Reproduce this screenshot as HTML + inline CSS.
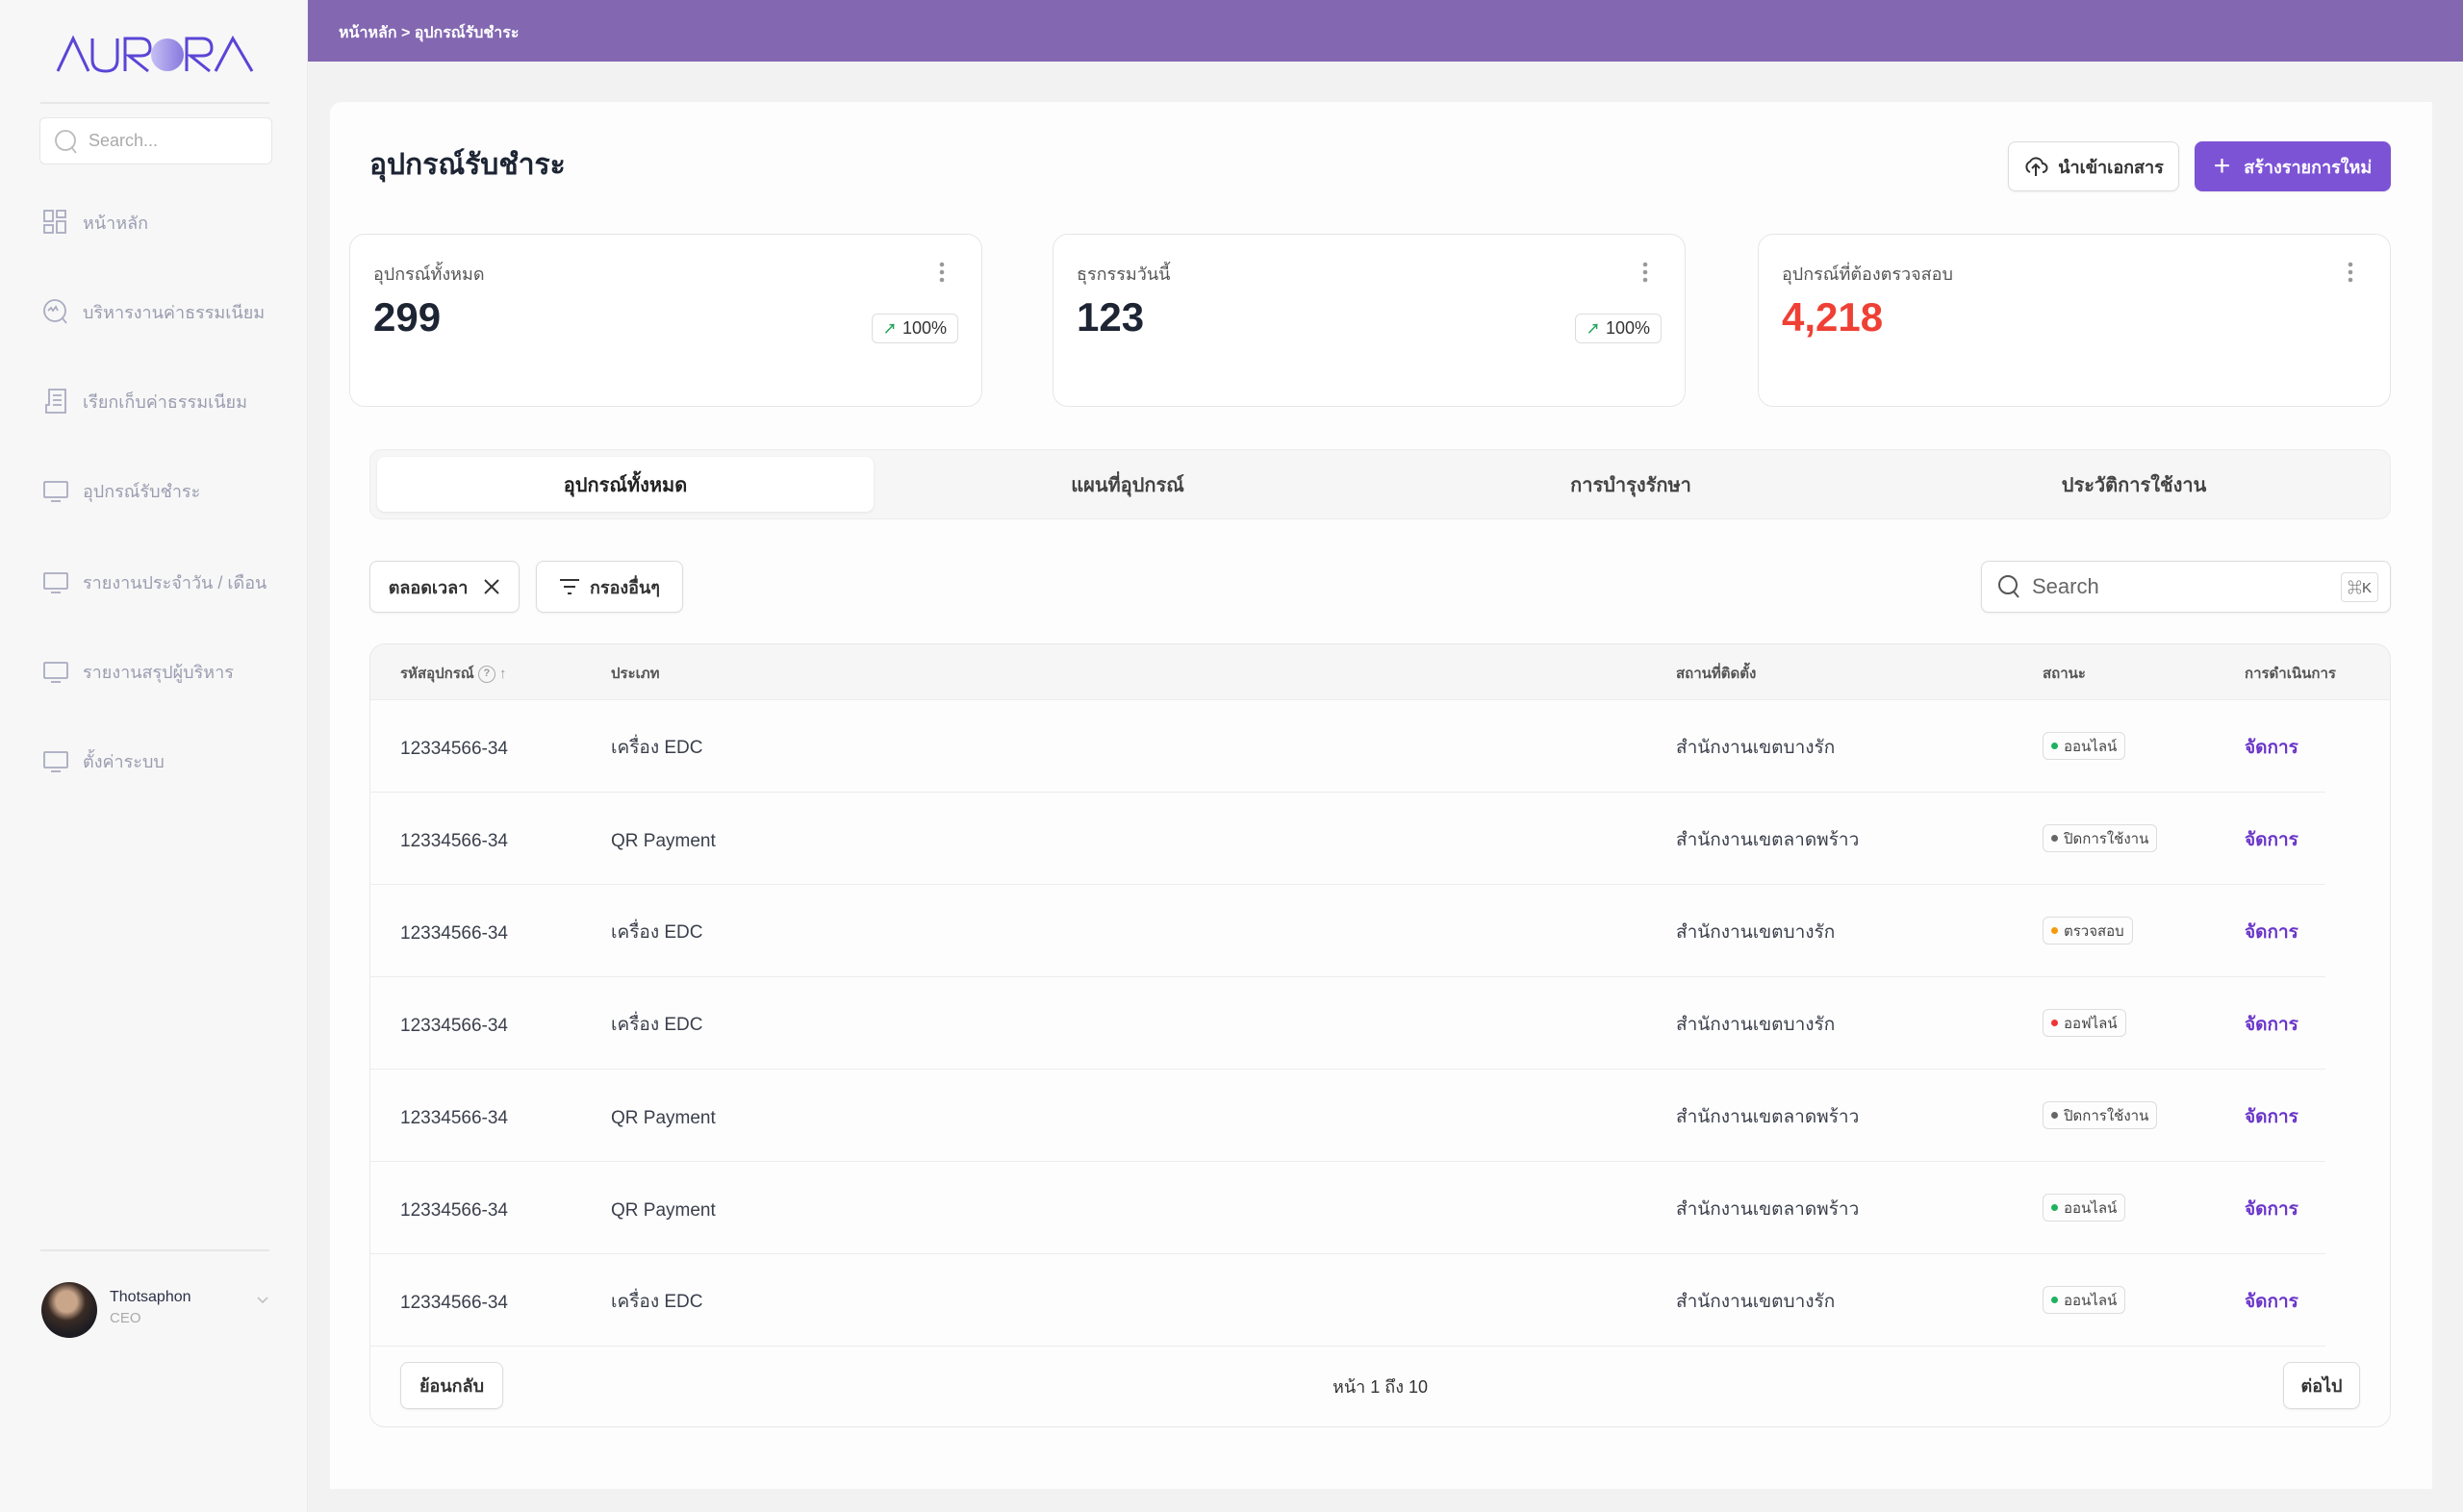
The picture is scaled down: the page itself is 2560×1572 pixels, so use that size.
<!DOCTYPE html>
<html><head><meta charset="utf-8"><style>
*{box-sizing:border-box;margin:0;padding:0}
body{width:2560px;height:1572px;background:#f2f2f2;font-family:"Liberation Sans","Noto Sans CJK SC",sans-serif;color:#1d2433;position:relative;overflow:hidden}
.a{position:absolute}
.sb{left:0;top:0;width:320px;height:1572px;background:#f7f7f7;border-right:1px solid #ececec}
.nav{left:44px;font-size:18px;color:#9a9cb0;display:flex;align-items:center;gap:14px;height:30px}
.nav svg{width:28px;height:28px}
.hdr{left:320px;top:0;width:2240px;height:64px;background:#8367b1;color:#fff;font-size:16px;font-weight:bold;padding:22px 0 0 32px}
.main{left:343px;top:106px;width:2185px;height:1442px;background:#fdfdfd;border-radius:12px 0 0 0}
.btn{border:1.5px solid #dcdcdc;border-radius:8px;background:#fff;display:flex;align-items:center;justify-content:center;font-weight:bold;font-size:18px;color:#333;box-shadow:0 1px 2px rgba(0,0,0,.06)}
.card{top:243px;width:658px;height:180px;border:1.5px solid #e6e6e6;border-radius:16px;background:#fff}
.card .l{left:24px;top:26px;font-size:18px;color:#555}
.card .n{left:24px;top:62px;font-size:42px;font-weight:bold;color:#1d2433}
.card .d{right:38px;top:28px;width:6px;height:22px}
.badge{right:24px;top:82px;width:90px;height:31px;border:1.5px solid #ddd;border-radius:6px;font-size:18px;color:#333;display:flex;align-items:center;justify-content:center;gap:6px}
.tab{top:475px;height:57px;display:flex;align-items:center;justify-content:center;font-size:20px;font-weight:bold;color:#444;width:516px}
.th{font-size:15px;font-weight:bold;color:#555;top:688px}
.row{left:384px;width:2033px;height:96px;border-bottom:1.5px solid #ececec}
.cell{font-size:19px;color:#3a3f4b}
.lt{margin-top:4px}
.th2{margin-top:-2px}
.st{height:29px;border:1.5px solid #ddd;border-radius:6px;font-size:15px;color:#444;display:flex;align-items:center;padding:0 8px;gap:6px}
.st i{width:7px;height:7px;border-radius:50%;display:inline-block}
.act{font-size:19px;font-weight:bold;color:#6a35c9;margin-top:-2px}
</style></head><body>
<div class="a sb"></div>
<svg class="a" style="left:58px;top:36px" width="206" height="40" viewBox="0 0 206 40" fill="none" stroke="#5a45d6" stroke-width="3">
<path d="M2 38 L18 4 L34 38"/><path d="M38 4 V26 Q38 38 52 38 Q64 38 64 26 V4"/><path d="M72 38 V4 H88 Q98 4 98 14 Q98 22 88 22 H76 L96 38"/>
<defs><linearGradient id="g" x1="0" x2="1"><stop offset="0" stop-color="#b9b2f2"/><stop offset="1" stop-color="#6a58d8"/></linearGradient></defs>
<circle cx="116" cy="21" r="17" fill="url(#g)" stroke="none" opacity=".8"/>
<path d="M136 38 V4 H152 Q162 4 162 14 Q162 22 152 22 H140 L160 38"/><path d="M166 38 L184 4 L204 38"/></svg>
<div class="a" style="left:42px;top:106px;width:238px;height:2px;background:#e7e7e7"></div>
<div class="a" style="left:41px;top:122px;width:242px;height:49px;background:#fff;border:1.5px solid #e6e6e6;border-radius:6px;display:flex;align-items:center;padding-left:14px;gap:10px;color:#aaa;font-size:18px"><svg width="26" height="28" viewBox="0 0 26 28" fill="none" stroke="#bbb" stroke-width="1.8"><circle cx="12" cy="13" r="10"/><path d="M19 21l4 5"/></svg>Search...</div>
<div class="a nav" style="top:216px"><svg viewBox="0 0 28 28" fill="none" stroke="#a9abc0" stroke-width="1.8"><rect x="2" y="2" width="9" height="11"/><rect x="15" y="2" width="9" height="7"/><rect x="2" y="17" width="9" height="8"/><rect x="15" y="13" width="9" height="12"/></svg>หน้าหลัก</div>
<div class="a nav" style="top:309px"><svg viewBox="0 0 28 28" fill="none" stroke="#a9abc0" stroke-width="1.8"><circle cx="13" cy="13" r="11"/><path d="M6 13l3-3 2 3 3-4 2 4M21 21l4 5"/></svg>บริหารงานค่าธรรมเนียม</div>
<div class="a nav" style="top:402px"><svg viewBox="0 0 28 28" fill="none" stroke="#a9abc0" stroke-width="1.8"><path d="M7 2h17v24H4v-8h3zM11 8h9M11 13h9M11 18h9"/></svg>เรียกเก็บค่าธรรมเนียม</div>
<div class="a nav" style="top:495px"><svg viewBox="0 0 28 28" fill="none" stroke="#a9abc0" stroke-width="1.8"><rect x="2" y="5" width="24" height="16" rx="1"/><path d="M9 25h10"/></svg>อุปกรณ์รับชำระ</div>
<div class="a nav" style="top:590px"><svg viewBox="0 0 28 28" fill="none" stroke="#a9abc0" stroke-width="1.8"><rect x="2" y="5" width="24" height="16" rx="1"/><path d="M9 25h10"/></svg>รายงานประจำวัน / เดือน</div>
<div class="a nav" style="top:683px"><svg viewBox="0 0 28 28" fill="none" stroke="#a9abc0" stroke-width="1.8"><rect x="2" y="5" width="24" height="16" rx="1"/><path d="M9 25h10"/></svg>รายงานสรุปผู้บริหาร</div>
<div class="a nav" style="top:776px"><svg viewBox="0 0 28 28" fill="none" stroke="#a9abc0" stroke-width="1.8"><rect x="2" y="5" width="24" height="16" rx="1"/><path d="M9 25h10"/></svg>ตั้งค่าระบบ</div>
<div class="a" style="left:42px;top:1299px;width:238px;height:2px;background:#e7e7e7"></div>
<div class="a" style="left:43px;top:1333px;width:58px;height:58px;border-radius:50%;background:radial-gradient(circle at 45% 35%,#c9a58a 0 22%,#3b2c25 40%,#1c1c22 70%)"></div>
<div class="a" style="left:114px;top:1340px;font-size:16px;color:#2c3048">Thotsaphon</div>
<div class="a" style="left:114px;top:1362px;font-size:15px;color:#aaa">CEO</div>
<svg class="a" style="left:266px;top:1347px" width="14" height="10" viewBox="0 0 14 10" fill="none" stroke="#bbb" stroke-width="1.5"><path d="M2 2l5 5 5-5"/></svg>

<div class="a hdr">หน้าหลัก &gt; อุปกรณ์รับชำระ</div>
<div class="a main"></div>
<div class="a" style="left:384px;top:148px;font-size:30px;font-weight:bold;color:#1d2433">อุปกรณ์รับชำระ</div>
<div class="a btn" style="left:2087px;top:147px;width:178px;height:52px;gap:10px"><svg width="26" height="26" viewBox="0 0 26 26" fill="none" stroke="#333" stroke-width="2"><path d="M7 19a6 6 0 0 1 0-11 7 7 0 0 1 13 2 4.5 4.5 0 0 1 0 9"/><path d="M13 23V12M9 15l4-4 4 4"/></svg>นำเข้าเอกสาร</div>
<div class="a btn" style="left:2281px;top:147px;width:204px;height:52px;background:#7d53d6;border-color:#7d53d6;color:#fff;gap:14px"><span style="font-size:30px;font-weight:normal;line-height:1">+</span>สร้างรายการใหม่</div>

<div class="a card" style="left:363px"><div class="a l">อุปกรณ์ทั้งหมด</div><div class="a n">299</div><svg class="a d" viewBox="0 0 6 22" fill="#999"><circle cx="3" cy="3" r="2.3"/><circle cx="3" cy="11" r="2.3"/><circle cx="3" cy="19" r="2.3"/></svg><div class="a badge"><span style="color:#22a35a;font-size:14px;font-weight:bold">↗</span>100%</div></div>
<div class="a card" style="left:1094px"><div class="a l">ธุรกรรมวันนี้</div><div class="a n">123</div><svg class="a d" viewBox="0 0 6 22" fill="#999"><circle cx="3" cy="3" r="2.3"/><circle cx="3" cy="11" r="2.3"/><circle cx="3" cy="19" r="2.3"/></svg><div class="a badge"><span style="color:#22a35a;font-size:14px;font-weight:bold">↗</span>100%</div></div>
<div class="a card" style="left:1827px"><div class="a l">อุปกรณ์ที่ต้องตรวจสอบ</div><div class="a n" style="color:#ef4035">4,218</div><svg class="a d" viewBox="0 0 6 22" fill="#999"><circle cx="3" cy="3" r="2.3"/><circle cx="3" cy="11" r="2.3"/><circle cx="3" cy="19" r="2.3"/></svg></div>

<div class="a" style="left:384px;top:467px;width:2101px;height:73px;background:#f6f6f6;border:1.5px solid #ececec;border-radius:12px"></div>
<div class="a" style="left:392px;top:475px;width:516px;height:57px;background:#fff;border-radius:8px;box-shadow:0 1px 3px rgba(0,0,0,.08)"></div>
<div class="a tab" style="left:392px;color:#222">อุปกรณ์ทั้งหมด</div>
<div class="a tab" style="left:914px">แผนที่อุปกรณ์</div>
<div class="a tab" style="left:1437px">การบำรุงรักษา</div>
<div class="a tab" style="left:1960px">ประวัติการใช้งาน</div>

<div class="a btn" style="left:384px;top:583px;width:156px;height:54px;gap:16px">ตลอดเวลา<svg width="18" height="18" viewBox="0 0 18 18" stroke="#333" stroke-width="2"><path d="M2 2l14 14M16 2L2 16"/></svg></div>
<div class="a btn" style="left:557px;top:583px;width:153px;height:54px;gap:10px"><svg width="22" height="18" viewBox="0 0 22 18" stroke="#333" stroke-width="2"><path d="M1 2h20M5 9h12M9 16h4"/></svg>กรองอื่นๆ</div>
<div class="a btn" style="left:2059px;top:583px;width:426px;height:54px;justify-content:flex-start;padding-left:16px;gap:12px;font-weight:normal;font-size:22px;color:#666"><svg width="24" height="26" viewBox="0 0 24 26" fill="none" stroke="#555" stroke-width="2"><circle cx="11" cy="11" r="9"/><path d="M17 18l5 6"/></svg>Search<span class="a" style="right:12px;top:11px;border:1px solid #ddd;border-radius:4px;font-size:15px;padding:4px 6px;color:#555">⌘K</span></div>

<div class="a" style="left:384px;top:669px;width:2101px;height:815px;border:1.5px solid #e8e8e8;border-radius:16px;background:#fdfdfd;overflow:hidden"><div style="height:58px;background:#f6f6f6;border-bottom:1.5px solid #ececec"></div></div>
<div class="a th" style="left:416px">รหัสอุปกรณ์ <span style="display:inline-block;width:18px;height:18px;border:1.5px solid #aaa;border-radius:50%;font-size:11px;text-align:center;line-height:15px;color:#999;vertical-align:middle">?</span> <span style="color:#999">↑</span></div>
<div class="a th" style="left:635px">ประเภท</div>
<div class="a th" style="left:1742px">สถานที่ติดตั้ง</div>
<div class="a th" style="left:2123px">สถานะ</div>
<div class="a th" style="left:2333px">การดำเนินการ</div>

<div class="a row" style="top:728px"></div><div class="a row" style="top:824px"></div><div class="a row" style="top:920px"></div><div class="a row" style="top:1016px"></div><div class="a row" style="top:1112px"></div><div class="a row" style="top:1208px"></div><div class="a row" style="top:1304px"></div>

<div class="a cell lt" style="left:416px;top:764px">12334566-34</div><div class="a cell th2" style="left:635px;top:764px">เครื่อง EDC</div><div class="a cell th2" style="left:1742px;top:764px">สำนักงานเขตบางรัก</div><div class="a st" style="left:2123px;top:761px"><i style="background:#1fb160"></i>ออนไลน์</div><div class="a act" style="left:2333px;top:764px">จัดการ</div>
<div class="a cell lt" style="left:416px;top:860px">12334566-34</div><div class="a cell lt" style="left:635px;top:860px">QR Payment</div><div class="a cell th2" style="left:1742px;top:860px">สำนักงานเขตลาดพร้าว</div><div class="a st" style="left:2123px;top:857px"><i style="background:#666"></i>ปิดการใช้งาน</div><div class="a act" style="left:2333px;top:860px">จัดการ</div>
<div class="a cell lt" style="left:416px;top:956px">12334566-34</div><div class="a cell th2" style="left:635px;top:956px">เครื่อง EDC</div><div class="a cell th2" style="left:1742px;top:956px">สำนักงานเขตบางรัก</div><div class="a st" style="left:2123px;top:953px"><i style="background:#f59a0c"></i>ตรวจสอบ</div><div class="a act" style="left:2333px;top:956px">จัดการ</div>
<div class="a cell lt" style="left:416px;top:1052px">12334566-34</div><div class="a cell th2" style="left:635px;top:1052px">เครื่อง EDC</div><div class="a cell th2" style="left:1742px;top:1052px">สำนักงานเขตบางรัก</div><div class="a st" style="left:2123px;top:1049px"><i style="background:#ee3535"></i>ออฟไลน์</div><div class="a act" style="left:2333px;top:1052px">จัดการ</div>
<div class="a cell lt" style="left:416px;top:1148px">12334566-34</div><div class="a cell lt" style="left:635px;top:1148px">QR Payment</div><div class="a cell th2" style="left:1742px;top:1148px">สำนักงานเขตลาดพร้าว</div><div class="a st" style="left:2123px;top:1145px"><i style="background:#666"></i>ปิดการใช้งาน</div><div class="a act" style="left:2333px;top:1148px">จัดการ</div>
<div class="a cell lt" style="left:416px;top:1244px">12334566-34</div><div class="a cell lt" style="left:635px;top:1244px">QR Payment</div><div class="a cell th2" style="left:1742px;top:1244px">สำนักงานเขตลาดพร้าว</div><div class="a st" style="left:2123px;top:1241px"><i style="background:#1fb160"></i>ออนไลน์</div><div class="a act" style="left:2333px;top:1244px">จัดการ</div>
<div class="a cell lt" style="left:416px;top:1340px">12334566-34</div><div class="a cell th2" style="left:635px;top:1340px">เครื่อง EDC</div><div class="a cell th2" style="left:1742px;top:1340px">สำนักงานเขตบางรัก</div><div class="a st" style="left:2123px;top:1337px"><i style="background:#1fb160"></i>ออนไลน์</div><div class="a act" style="left:2333px;top:1340px">จัดการ</div>

<div class="a btn" style="left:416px;top:1416px;width:107px;height:49px">ย้อนกลับ</div>
<div class="a" style="left:1385px;top:1427px;font-size:18px;color:#333">หน้า 1 ถึง 10</div>
<div class="a btn" style="left:2373px;top:1416px;width:80px;height:49px">ต่อไป</div>
</body></html>
